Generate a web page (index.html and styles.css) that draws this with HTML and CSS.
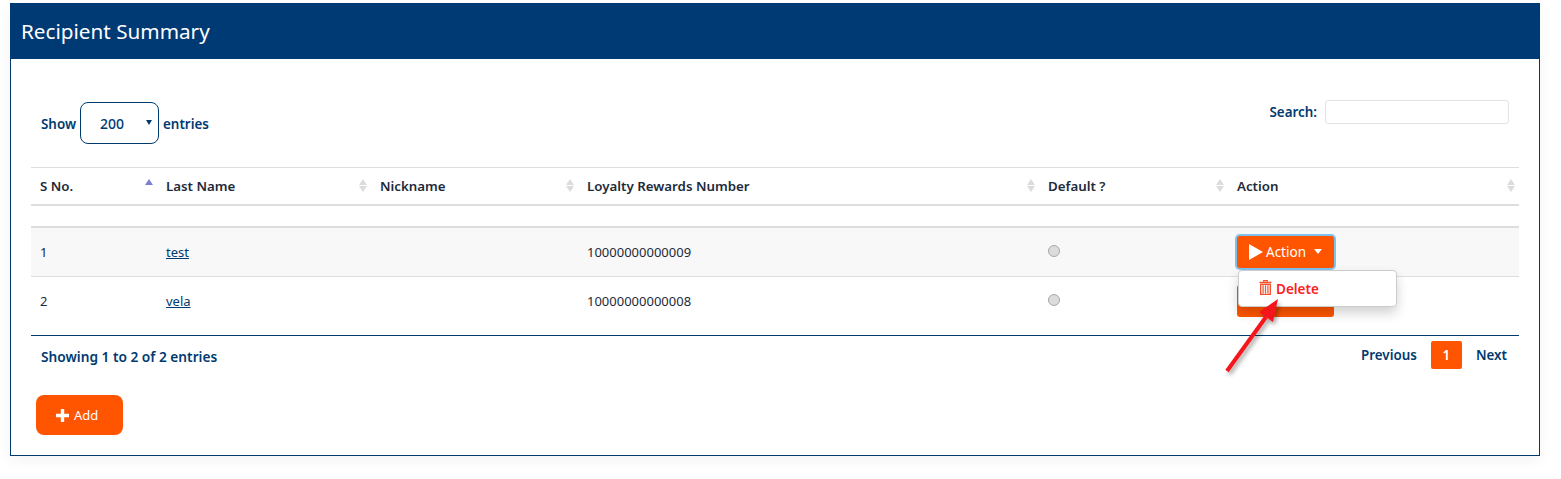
FILE: index.html
```html
<!DOCTYPE html>
<html lang="en">
<head>
<meta charset="utf-8">
<title>Recipient Summary</title>
<link rel="stylesheet" href="styles.css">
</head>
<body>
<main class="card">
  <header class="card-head"><h1>Recipient Summary</h1></header>
  <div class="card-body">
    <div class="toolbar">
      <div class="length">
        <span class="label">Show</span>
        <span class="select"><span>200</span><i class="caret-small"></i></span>
        <span class="label">entries</span>
      </div>
      <div class="search"><span>Search:</span><span class="search-input"></span></div>
    </div>
    <table class="grid">
      <colgroup>
        <col class="c1"><col class="c2"><col class="c3"><col class="c4"><col class="c5"><col class="c6">
      </colgroup>
      <thead>
        <tr>
          <th><div class="th-in">S No.<span class="sort asc"></span></div></th>
          <th><div class="th-in">Last Name<span class="sort"></span></div></th>
          <th><div class="th-in">Nickname<span class="sort"></span></div></th>
          <th><div class="th-in">Loyalty Rewards Number<span class="sort"></span></div></th>
          <th><div class="th-in">Default ?<span class="sort"></span></div></th>
          <th><div class="th-in">Action<span class="sort"></span></div></th>
        </tr>
      </thead>
      <tbody>
        <tr class="spacer"><td colspan="6"></td></tr>
        <tr class="odd">
          <td>1</td>
          <td><a href="#">test</a></td>
          <td></td>
          <td>10000000000009</td>
          <td><span class="radio"></span></td>
          <td class="action-cell">
            <button class="btn-action focused" type="button">
              <svg class="play" viewBox="0 0 14 16" width="14" height="16"><path d="M0 0 L14 8 L0 16 Z" fill="#fff"/></svg>
              Action<i class="caret"></i>
            </button>
            <div class="menu">
              <svg class="trash" viewBox="0 0 14 16" width="13" height="15">
                <path d="M5 1.5V.7h4v.8M.5 2.5h13M1.8 4.5h10.4v10.8H1.8z" fill="none" stroke="#f4502a" stroke-width="1.4"/>
                <path d="M4.4 5.5v9M7 5.5v9M9.6 5.5v9" stroke="#f4502a" stroke-width="1.3"/>
              </svg>
              <span>Delete</span>
            </div>
          </td>
        </tr>
        <tr>
          <td>2</td>
          <td><a href="#">vela</a></td>
          <td></td>
          <td>10000000000008</td>
          <td><span class="radio"></span></td>
          <td class="action-cell">
            <button class="btn-action under" type="button"></button>
          </td>
        </tr>
      </tbody>
    </table>
    <div class="foot">
      <span>Showing 1 to 2 of 2 entries</span>
      <nav class="pager"><a href="#" class="plain">Previous</a><a href="#" class="current">1</a><a href="#" class="plain">Next</a></nav>
    </div>
    <button class="btn-add" type="button">
      <svg viewBox="0 0 13 13" width="13" height="13"><path d="M6.5 0v13M0 6.5h13" stroke="#fff" stroke-width="3.4"/></svg>
      Add
    </button>
  </div>
</main>
<svg class="arrow" viewBox="0 0 70 90" width="70" height="90">
  <defs><filter id="sh" x="-30%" y="-30%" width="170%" height="170%"><feDropShadow dx="2" dy="3" stdDeviation="2" flood-color="#000" flood-opacity=".35"/></filter></defs>
  <g filter="url(#sh)">
    <path d="M8 79 L47 25" stroke="#f5141c" stroke-width="4" fill="none"/>
    <path d="M59 7 L40 20 L54 30 Z" fill="#f5141c"/>
  </g>
</svg>
</body>
</html>
```
FILE: styles.css
```css
* { box-sizing: border-box; }
html, body { margin: 0; padding: 0; background: #fff; }
body {
  position: relative;
  height: 479px;
  overflow: hidden;
  padding: 3px 21px 0 10px;
  font-family: "Noto Sans", "Open Sans", sans-serif;
  font-size: 13px;
  color: #1d2a3a;
}
.card {
  height: 453px;
  border: 1px solid #003a70;
  border-top: 0;
  box-shadow: 0 4px 14px rgba(0, 0, 0, .05);
}
.card-head {
  height: 56px;
  margin: 0 -1px;
  background: #003a75;
  display: flex;
  align-items: center;
  padding: 0 11px 1px;
}
.card-head h1 { margin: 0; font-size: 20.7px; font-weight: 400; color: #fff; }
.card-body { padding: 41px 20px 0; }
.toolbar { display: flex; justify-content: space-between; align-items: flex-start; height: 67px; padding: 0 10px; font-size: 13.4px; font-weight: 600; color: #003a70; }
.length { display: flex; align-items: center; gap: 4px; margin-top: 2px; }
.label { margin-top: 2px; }
.select {
  width: 79px; height: 42px;
  border: 1px solid #003a70;
  border-radius: 8px;
  display: flex; align-items: center; justify-content: space-between;
  padding: 0 6px 0 19px;
  font-size: 14px;
  font-weight: 500;
}
.caret-small { width: 0; height: 0; border: 3.5px solid transparent; border-top: 5px solid #003a70; border-bottom: 0; margin-bottom: 1px; }
.search { display: flex; align-items: center; gap: 8px; }
.search-input { display: block; width: 184px; height: 24px; border: 1px solid #e3e3e3; border-radius: 3px; }
.grid { width: 1488px; table-layout: fixed; border-collapse: collapse; }
.c1 { width: 126px; } .c2 { width: 214px; } .c3 { width: 207px; }
.c4 { width: 461px; } .c5 { width: 189px; } .c6 { width: 291px; }
.grid th {
  height: 37px;
  padding: 0 0 0 9px;
  border-top: 1px solid #ddd;
  border-bottom: 2px solid #ddd;
  font-size: 13.3px;
  font-weight: 600;
  text-align: left;
  color: #1d2a3a;
}
.th-in { display: flex; justify-content: space-between; align-items: center; padding-right: 4px; }
.sort { display: flex; flex-direction: column; gap: 1px; }
.sort::before, .sort::after { content: ""; width: 0; height: 0; border: 4px solid transparent; }
.sort::before { border-top: 0; border-bottom: 6px solid #dcdcdc; }
.sort::after { border-bottom: 0; border-top: 6px solid #dcdcdc; }
.sort.asc { margin: -8px 0 0 0; }
.sort.asc::before { border-width: 0 4.5px 6px; border-bottom-color: #7a7fd6; }
.sort.asc::after { display: none; }
.spacer td { height: 22px; padding: 0; border-bottom: 2px solid #ddd; }
.grid tbody tr:not(.spacer) td { height: 50px; padding: 1px 0 0 9px; }
.grid tbody tr.odd td { background: #f8f8f8; border-bottom: 1px solid #ddd; }
.grid tbody tr:last-child td { height: 59px; border-bottom: 1px solid #003a70; padding: 0 0 10px 9px; }
.grid a { color: #003a70; }
.radio { display: block; width: 12px; height: 12px; margin: 0 0 2px; border-radius: 50%; background: #dcdcdc; border: 1px solid #a8a8a8; }
.action-cell { position: relative; }
.btn-action {
  display: inline-flex; align-items: center; gap: 3px;
  width: 97px; height: 32px; padding: 0 0 0 12px;
  border: 0; border-radius: 3px;
  background: #ff5500; color: #fff;
  font: inherit; font-size: 13.5px;
  vertical-align: middle;
}
.btn-action.focused { box-shadow: 0 0 0 2px #7fc1ee; }
.caret { width: 0; height: 0; margin-left: 5px; border: 4.5px solid transparent; border-top: 5px solid #fff; border-bottom: 0; margin-bottom: 2px; }
.menu {
  position: absolute; left: 10px; top: 42px;
  display: flex; align-items: center; gap: 4px;
  width: 159px; height: 37px;
  padding: 1px 0 0 20px;
  background: #fff; border: 1px solid #ccc; border-radius: 4px;
  box-shadow: 0 6px 12px rgba(0, 0, 0, .18);
  color: #ff2020; font-size: 13.5px; font-weight: 600;
  z-index: 2;
}
.trash { margin-top: -3px; }
.foot { display: flex; justify-content: space-between; align-items: flex-start; padding: 5px 12px 0 10px; font-size: 13.7px; font-weight: 600; color: #003a70; }
.foot > span { margin-top: 6px; }
.pager { display: flex; align-items: center; gap: 14px; font-size: 13.4px; }
.pager a { color: #003a70; text-decoration: none; }
.pager .plain { padding-top: 1px; padding-bottom: 1px; }
.pager .current { display: flex; align-items: center; justify-content: center; width: 31px; height: 28px; background: #ff5500; color: #fff; border-radius: 2px; }
.btn-add {
  display: flex; align-items: center; gap: 5px;
  width: 87px; height: 40px; margin: 26px 0 0 5px;
  padding: 0 0 0 20px;
  border: 0; border-radius: 8px;
  background: #ff5500; color: #fff;
  font: inherit;
}
.arrow { position: absolute; left: 1219px; top: 292px; z-index: 3; }
```
